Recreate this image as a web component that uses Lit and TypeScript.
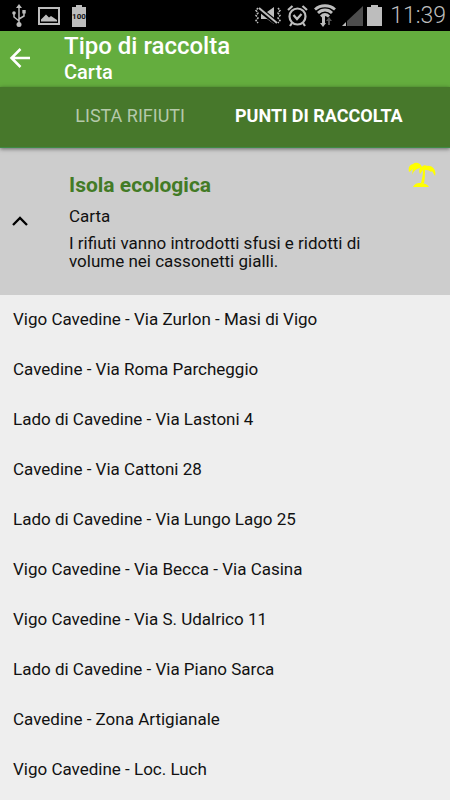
import { LitElement, html, css } from "lit";
import { customElement, property, state } from "lit/decorators.js";

@customElement("status-bar")
class StatusBar extends LitElement {
  static styles = css`
    :host {
      display: flex;
      align-items: center;
      justify-content: space-between;
      height: 31px;
      padding: 0 4px 0 12px;
      background: #000;
      color: #bdbdbd;
    }
    .group {
      display: flex;
      align-items: center;
    }
    .left { gap: 12px; }
    .right { gap: 6px; }
    svg { display: block; }
    .battery { margin-left: -2px; }
    .clock {
      font-size: 23px;
      line-height: 28px;
      font-weight: 300;
      margin-left: 2px;
    }
    .level {
      font: 700 8px "Roboto", sans-serif;
      fill: #111;
    }
  `;
  render() {
    return html`
      <div class="group left">
        <svg width="14" height="24" viewBox="0 0 14 24" fill="none" stroke="currentColor" stroke-width="1.5">
          <path d="M7 3v17M7 17L2 13V9M7 15l5-3V8" />
          <path d="M7 0l3 4H4z" fill="currentColor" stroke="none" />
          <circle cx="7" cy="20.500" r="2.500" fill="currentColor" stroke="none" />
          <circle cx="2" cy="9" r="1.800" fill="currentColor" stroke="none" />
          <path d="M10.300 6h3.400v3.400h-3.400z" fill="currentColor" stroke="none" />
        </svg>
        <svg width="22" height="18" viewBox="0 0 22 18">
          <path d="M1 1h20v16H1z" fill="none" stroke="currentColor" stroke-width="2" />
          <path d="M3 14.500v-2l5-5 3 3 2-1.500 6 4v1.500z" fill="currentColor" />
        </svg>
        <svg width="14" height="22" viewBox="0 0 14 22">
          <path d="M4 0h6v2h4v20H0V2h4z" fill="currentColor" />
          <text class="level" x="7" y="14" text-anchor="middle">100</text>
        </svg>
      </div>
      <div class="group right">
        <svg width="26" height="18" viewBox="0 0 26 18">
          <path d="M6 5h6l7-5v17l-7-5H6z" fill="currentColor" />
          <path d="M3 1l20 16" stroke="#000" stroke-width="5" />
          <path d="M4 1l18 15" stroke="currentColor" stroke-width="2" />
          <path d="M3 1L1 3.500 3 6 1 8.500 3 11l-2 2.500L3 16M23 1l2 2.500L23 6l2 2.500-2 2.500 2 2.500-2 2.500" fill="none" stroke="currentColor" stroke-width="1.500" stroke-dasharray="2 1" />
        </svg>
        <svg width="21" height="22" viewBox="0 0 21 22" fill="none" stroke="currentColor" stroke-width="2.200">
          <circle cx="10.500" cy="11.500" r="8" />
          <path d="M6.500 10l3.500 4 4.500-5M1 5l4.500-4M20 5l-4.500-4M5 18l-2 3M16 18l2 3" />
        </svg>
        <svg width="22" height="23" viewBox="0 0 22 23">
          <g fill="none" stroke="currentColor" stroke-width="2.800">
            <path d="M1 5.500C6.500.500 15.500.500 21 5.500M4 9c4-4 10-4 14 0M7 12.500c2.500-2.500 5.500-2.500 8 0" />
          </g>
          <path d="M8 12h3v7h1l-3 4-3-4h2z" fill="currentColor" />
          <path d="M14 21v-4h-2l3-4 3 4h-2v4z" fill="#555" />
        </svg>
        <svg width="21" height="20" viewBox="0 0 21 20">
          <path d="M21 0v20H5v-5z" fill="#4d4d4d" />
          <path d="M4 16v4H0z" fill="currentColor" />
        </svg>
        <svg class="battery" width="15" height="21" viewBox="0 0 15 21">
          <path d="M4 0h7v2h4v19H0V2h4z" fill="currentColor" />
        </svg>
        <time class="clock">11:39</time>
      </div>
    `;
  }
}

@customElement("top-bar")
class TopBar extends LitElement {
  @property() heading = "";
  @property() subheading = "";
  static styles = css`
    :host {
      display: flex;
      align-items: center;
      height: 56px;
      padding: 0 8px;
      gap: 32px;
      background: #64ad3e;
      color: #fff;
    }
    button {
      width: 24px;
      height: 24px;
      padding: 0;
      border: 0;
      background: none;
      color: inherit;
    }
    svg { display: block; }
    h1, p {
      margin: 0;
      font-weight: 500;
    }
    h1 {
      font-size: 24px;
      line-height: 28px;
    }
    p {
      font-size: 20px;
      line-height: 24px;
      margin-bottom: 2px;
    }
  `;
  render() {
    return html`
      <button aria-label="Indietro">
        <svg width="24" height="24" viewBox="0 0 24 24" fill="none" stroke="currentColor" stroke-width="2.500">
          <path d="M22 11H4M12.500 2L3.500 11l9 9" />
        </svg>
      </button>
      <div>
        <h1>${this.heading}</h1>
        <p>${this.subheading}</p>
      </div>
    `;
  }
}

@customElement("app-root")
class AppRoot extends LitElement {
  @state() private active = 1;
  @state() private open = true;

  private tabs = ["LISTA RIFIUTI", "PUNTI DI RACCOLTA"];
  private places = [
    "Vigo Cavedine - Via Zurlon - Masi di Vigo",
    "Cavedine - Via Roma Parcheggio",
    "Lado di Cavedine - Via Lastoni 4",
    "Cavedine - Via Cattoni 28",
    "Lado di Cavedine - Via Lungo Lago 25",
    "Vigo Cavedine - Via Becca - Via Casina",
    "Vigo Cavedine - Via S. Udalrico 11",
    "Lado di Cavedine - Via Piano Sarca",
    "Cavedine - Zona Artigianale",
    "Vigo Cavedine - Loc. Luch",
  ];

  static styles = css`
    :host {
      display: block;
      min-height: 100vh;
      background: #eee;
      color: #111;
      font-family: "Roboto", sans-serif;
    }
    .tabs {
      display: flex;
      justify-content: center;
      gap: 50px;
      height: 61px;
      padding: 0 0 3px 28px;
      position: relative;
      background: #47782b;
      box-sizing: border-box;
      border-bottom: 1px solid #3f8a45;
      box-shadow: 0 1px 4px rgba(0, 0, 0, 0.5);
    }
    .tab {
      padding: 0;
      border: 0;
      background: none;
      font: 400 18px "Roboto", sans-serif;
      color: #b5c9aa;
    }
    .tab.active {
      font-weight: 700;
      color: #fff;
    }
    .group {
      display: flex;
      align-items: center;
      box-sizing: border-box;
      width: 100%;
      min-height: 147px;
      padding: 0 12px 2px;
      border: 0;
      background: #cdcdcd;
      color: inherit;
      font: 400 17px/18px "Roboto", sans-serif;
      text-align: left;
    }
    .chevron { flex: none; }
    .info {
      flex: 1;
      display: flex;
      flex-direction: column;
      gap: 9px;
      margin-left: 41px;
    }
    .title {
      font-size: 21px;
      line-height: 26px;
      font-weight: 700;
      color: #437b26;
    }
    .detail { max-width: 310px; }
    .palm {
      flex: none;
      align-self: flex-start;
      margin: 14px 2px 0 -28px;
    }
    ul {
      list-style: none;
      margin: 0;
      padding: 0;
    }
    li {
      padding: 12px 13px 14px;
      font-size: 17px;
      line-height: 24px;
    }
  `;

  render() {
    return html`
      <status-bar></status-bar>
      <top-bar heading="Tipo di raccolta" subheading="Carta"></top-bar>
      <nav class="tabs" role="tablist">
        ${this.tabs.map(
          (label, i) => html`<button
            role="tab"
            class="tab ${i === this.active ? "active" : ""}"
            aria-selected=${i === this.active}
            @click=${() => (this.active = i)}
          >${label}</button>`
        )}
      </nav>
      <button class="group" aria-expanded=${this.open} @click=${() => (this.open = !this.open)}>
        <svg class="chevron" width="16" height="10" viewBox="0 0 16 10" fill="none" stroke="#000" stroke-width="2.300">
          <path d="M1 9l7-7 7 7" />
        </svg>
        <span class="info">
          <span class="title">Isola ecologica</span>
          <span>Carta</span>
          <span class="detail">I rifiuti vanno introdotti sfusi e ridotti di volume nei cassonetti gialli.</span>
        </span>
        <svg class="palm" width="28" height="26" viewBox="0 0 28 26" fill="#ff0">
          <path d="M14 5C12 0 7 0 5 2 1 3 0 6 1 10l4-3-1 6c1-3 3-5 5-6l3-1c-1 2-1 4 0 6l3-4c0 5-1 9-2 13h3c1-5 1-9 1-13 2 0 4 0 6 2l1-1 3 5c2-6-3-11-8-10-1-1-4-1-5 1z" />
          <path d="M5 25c2-4 5-4 8-4s6 1 8 4z" />
        </svg>
      </button>
      ${this.open ? html`<ul>${this.places.map((p) => html`<li>${p}</li>`)}</ul>` : ""}
    `;
  }
}
